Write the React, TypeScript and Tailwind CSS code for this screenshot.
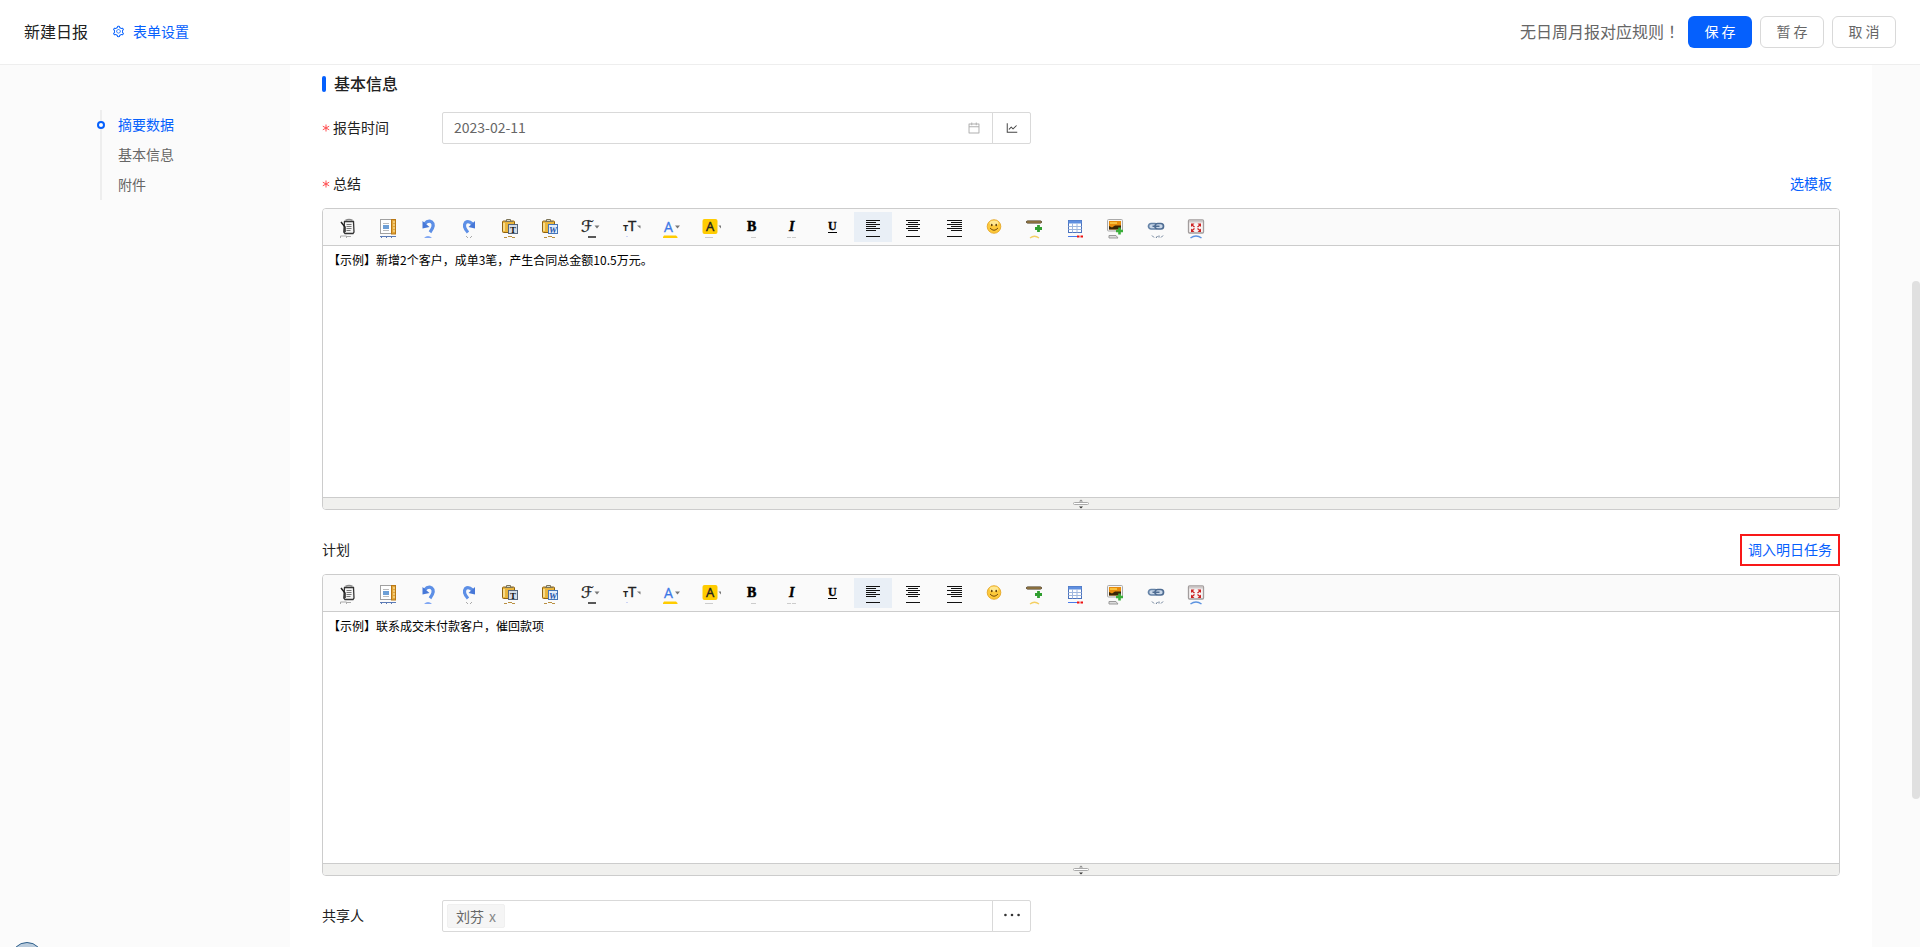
import { useState } from 'react';
import type { ReactNode } from 'react';
import { AiOutlineCalendar, AiOutlineEllipsis, AiOutlineLineChart, AiOutlineSetting } from 'react-icons/ai';

interface Tool {
  name: string;
  icon: ReactNode;
}

const Clipboard = () => (
  <>
    <rect x="2.5" y="3" width="12" height="11.5" rx="1" fill="#e9b53c" stroke="#8f6210" />
    <path d="M4 5v8" stroke="#fbe6a0" strokeWidth="1.6" />
    <path d="M5 3.5h8M6.5 1.5h4v2h-4z" fill="#d8d8c8" stroke="#7d7559" />
  </>
);

const Caret = ({ x }: { x: number }) => (
  <path d={`M${x} 7.5h5l-2.5 3z`} fill="#777" />
);

const tools: Tool[] = [
  {
    name: '源代码',
    icon: (
      <>
        <path d="M6.5 3.5h9l.5 10.5-1 1.500H7L5.800 14z" fill="#f4f4f4" stroke="#333" strokeWidth="1.3" />
        <path d="M7.5 2.5q3.5-2 7 0" fill="none" stroke="#888" strokeWidth="1.6" />
        <path d="M8.5 6.5h5M8.5 8.5h5M8.5 10.5h5M8.5 12.5h4" stroke="#777" />
        <path d="M3 4l4 5v5" fill="none" stroke="#222" strokeWidth="1.5" />
        <path d="M2.5 20v-2h6v2M9 18.5h4" fill="none" stroke="#aaa" />
      </>
    ),
  },
  {
    name: '模板',
    icon: (
      <>
        <rect x="2.5" y="1.5" width="11" height="14" fill="#fff" stroke="#444" strokeDasharray="1 1" />
        <rect x="5" y="7" width="6" height="4" fill="#6d9fd6" />
        <path d="M5 5.5h6M5 12.5h6" stroke="#bbb" />
        <rect x="13.5" y="1.5" width="4" height="14.5" fill="#e3a53a" stroke="#b97815" />
        <path d="M15 4h2M15 7h2M15 10h2M15 13h2" stroke="#fff0b0" />
        <path d="M2 18.5h16M3 19.5h1M8 19.5h1M13 19.5h1" stroke="#5c7bb5" />
      </>
    ),
  },
  {
    name: '后退',
    icon: (
      <>
        <path d="M5.500 6Q9 2 12.500 3.800q4 3.200-1.500 10.500" fill="none" stroke="#5d8fe6" strokeWidth="3.2" />
        <path d="M3.5 3v7.500l7-1.500z" fill="#4778d8" />
        <path d="M5 20q4-4 8 0z" fill="#7fa6f3" />
      </>
    ),
  },
  {
    name: '前进',
    icon: (
      <>
        <path d="M13.500 6Q9.500 2 6.500 4.500q-3 4 2.500 10" fill="none" stroke="#5d8fe6" strokeWidth="3.2" />
        <path d="M16 3v7.500l-6.500-1.500z" fill="#4778d8" />
        <path d="M7 18l2 2M13 18l-2 2" stroke="#aaa" />
      </>
    ),
  },
  {
    name: '粘贴为无格式文本',
    icon: (
      <>
        <Clipboard />
        <rect x="8.5" y="6.5" width="9" height="9" fill="#d4dde8" stroke="#56667c" />
        <text x="10" y="14.5" fontSize="9" fontWeight="bold" fontFamily="Liberation Serif, serif" fill="#111">T</text>
        <path d="M4 19.5h3M8 18.5h4M12 19.5h3" stroke="#b99042" />
      </>
    ),
  },
  {
    name: '从Word粘贴',
    icon: (
      <>
        <Clipboard />
        <rect x="8.5" y="6.5" width="9" height="9" fill="#e4eefb" stroke="#4676b8" />
        <text x="9" y="14.5" fontSize="9" fontWeight="bold" fontStyle="italic" fontFamily="Liberation Serif, serif" fill="#1d54a8">W</text>
        <path d="M4 19.5h3M8 18.5h4M12 19.5h3" stroke="#b99042" />
      </>
    ),
  },
  {
    name: '字体',
    icon: (
      <>
        <text x="1" y="14" fontSize="16" fontFamily="DejaVu Sans, serif" fill="#222" stroke="#222" strokeWidth=".3">ℱ</text>
        <Caret x={14.5} />
        <path d="M8 19h8" stroke="#222" strokeWidth="1.5" />
      </>
    ),
  },
  {
    name: '文字大小',
    icon: (
      <>
        <text x="2" y="13" fontSize="9" fontWeight="bold" fontFamily="Open Sans, sans-serif" fill="#222">T</text>
        <text x="7" y="13" fontSize="15" fontFamily="Open Sans, sans-serif" fill="#222" stroke="#222" strokeWidth=".4">T</text>
        <path d="M16 7.5h3.500v3z" fill="#777" />
        <path d="M5 18.500h2" stroke="#cdd4f5" />
      </>
    ),
  },
  {
    name: '文字颜色',
    icon: (
      <>
        <text x="3" y="14" fontSize="14" fontFamily="Open Sans, sans-serif" fill="#3b78e7" stroke="#3b78e7" strokeWidth=".3">A</text>
        <Caret x={14} />
        <path d="M2 20v-1l1-1.5h12l1.500 1.500v1z" fill="#fc0" />
      </>
    ),
  },
  {
    name: '文字背景',
    icon: (
      <>
        <rect x="1.5" y="1" width="15" height="15" rx="2" fill="#fc0" />
        <text x="5" y="13" fontSize="13" fontFamily="Open Sans, sans-serif" fill="#222" stroke="#222" strokeWidth=".4">A</text>
        <path d="M17.5 7.500h2.500v3z" fill="#777" />
        <path d="M4 19.5h8" stroke="#ccc" />
      </>
    ),
  },
  {
    name: '粗体',
    icon: (
      <>
        <text x="5" y="13" fontSize="14" fontWeight="bold" fontFamily="Liberation Serif, serif" fill="#000" stroke="#000" strokeWidth=".5">B</text>
        <path d="M9 19.5h5" stroke="#ccc" />
      </>
    ),
  },
  {
    name: '斜体',
    icon: (
      <>
        <text x="7" y="13" fontSize="14" fontWeight="bold" fontStyle="italic" fontFamily="Liberation Serif, serif" fill="#000" stroke="#000" strokeWidth=".4">I</text>
        <path d="M5 19.5h4M10 19.5h4" stroke="#ccc" />
      </>
    ),
  },
  {
    name: '下划线',
    icon: (
      <>
        <text x="5" y="12" fontSize="12" fontWeight="bold" fontFamily="Liberation Serif, serif" fill="#000" stroke="#000" strokeWidth=".3">U</text>
        <path d="M5 14.5h9" stroke="#000" />
      </>
    ),
  },
  {
    name: '左对齐',
    icon: (
      <path d="M3 2.5h14M3 4.5h10M3 6.5h14M3 8.5h10M3 10.5h14M3 12.5h10M3 18.5h14" stroke="#111" />
    ),
  },
  {
    name: '居中',
    icon: (
      <path d="M3 2.5h14M5 4.5h10M3 6.5h14M5 8.5h10M3 10.5h14M5 12.5h10M3 18.5h14" stroke="#111" />
    ),
  },
  {
    name: '右对齐',
    icon: (
      <path d="M3 2.5h15M7 4.5h11M3 6.5h15M7 8.5h11M3 10.5h15M7 12.5h11M3 18.5h15" stroke="#111" />
    ),
  },
  {
    name: '插入表情',
    icon: (
      <>
        <circle cx="10" cy="8.500" r="6.8" fill="#fdc93a" stroke="#e2a01b" strokeWidth=".8" />
        <ellipse cx="10" cy="5" rx="4.5" ry="2.5" fill="#fff0a8" opacity=".8" />
        <ellipse cx="7.8" cy="7" rx=".8" ry="1.3" fill="#5b3a08" />
        <ellipse cx="12.2" cy="7" rx=".8" ry="1.3" fill="#5b3a08" />
        <path d="M6 10q4 4.500 8 0" fill="none" stroke="#7a4d0a" />
      </>
    ),
  },
  {
    name: '插入横线',
    icon: (
      <>
        <rect x="2.5" y="3" width="15" height="2" rx="1" fill="#d6b26a" stroke="#3b2a10" />
        <path d="M14.500 7v7M11 10.500h7" stroke="#2f9e2f" strokeWidth="2.800" />
        <path d="M6 20q4.500-3.500 9 0" fill="none" stroke="#f4cf62" strokeWidth="1.3" />
      </>
    ),
  },
  {
    name: '表格',
    icon: (
      <>
        <rect x="3.5" y="2.500" width="13" height="12" fill="#fff" stroke="#4b73bd" />
        <path d="M3.500 4h13" stroke="#5f8fe0" strokeWidth="3" />
        <path d="M3.500 8.500h13M3.500 11.500h13M7.500 5.500v9M12 5.500v9" stroke="#9fb7de" />
        <path d="M3 18.500h10" stroke="#4a7bea" />
        <path d="M12 18.500h2.500M15.500 18.500H18" stroke="#e11" strokeWidth="2" />
      </>
    ),
  },
  {
    name: '图片',
    icon: (
      <>
        <rect x="2.5" y="1.5" width="15" height="11.5" rx="1" fill="#f4f4f4" stroke="#aaa" />
        <rect x="4" y="3" width="12" height="8.500" fill="#e78b0c" />
        <path d="M4 11.500V8l3 1.500 3-2h6v4z" fill="#3a2506" />
        <path d="M5 5h7" stroke="#ffd24c" strokeWidth="1.5" />
        <path d="M14.500 9.500v7M11 13h7" stroke="#3aae3a" strokeWidth="2.600" />
        <path d="M4 20v-2.500h7l2 2.500z" fill="#ddd" stroke="#999" />
      </>
    ),
  },
  {
    name: '超级链接',
    icon: (
      <>
        <rect x="2.5" y="5.500" width="9" height="5.500" rx="2.700" fill="#c9d7e8" stroke="#6482a6" strokeWidth="1.700" />
        <rect x="9" y="5.500" width="8.500" height="5.500" rx="2.700" fill="#c9d7e8" stroke="#4e6c92" strokeWidth="1.700" />
        <path d="M6.500 8.300h7" stroke="#4e6c92" strokeWidth="1.500" />
        <path d="M6 17.500l2 2M10 20l1.500-2M17 17.500l-2 2M13 17.500v2" stroke="#667a94" />
      </>
    ),
  },
  {
    name: '全屏显示',
    icon: (
      <>
        <rect x="2.5" y="2" width="15" height="13" rx="1" fill="#f7f3f3" stroke="#a29d9d" strokeWidth="1.300" />
        <path d="M3 3.500h14" stroke="#cfcaca" strokeWidth="2" />
        <path d="M5 5.500h3.500L5 9zM15 5.500h-3.500L15 9zM5 14h3.500L5 10.500zM15 14h-3.500L15 10.500z" fill="#c22" />
        <path d="M6 7l2.500 2M14 7l-2.500 2M6 12.500l2.500-2M14 12.500l-2.500-2" stroke="#c22" strokeWidth="1.300" />
        <path d="M4.500 20q5.500-4 11 0" fill="none" stroke="#5c93e0" strokeWidth="1.500" />
      </>
    ),
  },
];

function RichEditor({ id, text }: { id: string; text: string }) {
  const [value, setValue] = useState(text);

  return (
    <div className="mt-2 overflow-hidden rounded border border-[#ccc]">
      <div className="flex h-[37px] items-center border-b border-[#ccc] bg-[#fafafa] pl-[6px]">
        <div className="flex w-full max-w-[886px] justify-between">
          {tools.map((tool) => (
            <button
              key={tool.name}
              type="button"
              aria-label={tool.name}
              className={`flex h-[30px] w-[38px] items-center justify-center pt-[2px] ${tool.name === '左对齐' ? 'bg-[#e9eff6]' : ''}`}
            >
              <svg width="20" height="20" viewBox="0 0 20 20" className="overflow-visible">{tool.icon}</svg>
            </button>
          ))}
        </div>
      </div>
      <textarea
        id={id}
        value={value}
        onChange={(e) => setValue(e.target.value)}
        className="block h-[251px] w-full resize-none bg-white p-[5px] text-[12px] leading-[18px] text-black outline-none"
      />
      <div className="flex h-3 items-center justify-center border-t border-[#ccc] bg-[#f0f0ee]">
        <svg width="16" height="10" viewBox="0 0 16 10">
          <path d="M6 2.500h4L8 .5z" fill="#888" />
          <rect x=".5" y="3.500" width="15" height="2" rx="1" fill="#fff" stroke="#aaa" />
          <path d="M6 7.500h4L8 9.500z" fill="#333" />
        </svg>
      </div>
    </div>
  );
}

function Required() {
  return (
    <svg width="8" height="8" viewBox="0 0 8 8" className="mr-[3px]" aria-hidden="true">
      <path d="M4 .5v7M.8 2.200l6.400 3.600M.8 5.800l6.400-3.600" stroke="#ff4d4f" fill="none" />
    </svg>
  );
}

export default function App() {
  const [date, setDate] = useState('2023-02-11');
  const [sharers, setSharers] = useState(['刘芬']);

  return (
    <div className="relative flex min-h-screen flex-col overflow-hidden bg-[#fbfbfb] font-['Noto_Sans_CJK_SC',sans-serif] text-[14px] leading-[22px] text-[#212121]">
      <header className="flex h-[65px] items-center justify-between border-b border-[#eee] bg-white px-6">
        <div className="flex items-center pb-[2px]">
          <h1 className="text-[16px]">新建日报</h1>
          <a href="#settings" className="ml-6 flex items-center gap-2 text-[#0560fd]">
            <AiOutlineSetting className="h-[13px] w-[13px]" />
            表单设置
          </a>
        </div>
        <div className="flex items-center gap-2">
          <span className="pb-[2px] font-['Noto_Sans_CJK_SC',sans-serif] text-[16px] text-[#666]">
            无日周月报对应规则<span className="font-['Noto_Sans_CJK_TC',sans-serif]">！</span>
          </span>
          <button type="button" className="h-8 w-16 rounded-md bg-[#0560fd] pb-[2px] text-white">保 存</button>
          <button type="button" className="h-8 w-16 rounded-md border border-[#d9d9d9] bg-white pb-[2px] text-[#666]">暂 存</button>
          <button type="button" className="h-8 w-16 rounded-md border border-[#d9d9d9] bg-white pb-[2px] text-[#666]">取 消</button>
        </div>
      </header>

      <div className="flex flex-1">
        <aside className="w-[290px] shrink-0 pt-[45px] pl-[100px]">
          <nav className="flex flex-col border-l-2 border-[#eee] pl-4 text-[#666]">
            <a href="#summary" className="relative flex h-[30px] items-center pb-[2px] text-[#0560fd]">
              <span className="absolute top-[11px] -left-[21px] h-2 w-2 rounded-full border-2 border-[#0560fd] bg-white" />
              摘要数据
            </a>
            <a href="#basic" className="flex h-[30px] items-center pb-[2px]">基本信息</a>
            <a href="#files" className="flex h-[30px] items-center pb-[2px]">附件</a>
          </nav>
        </aside>

        <main className="mr-12 min-w-0 flex-1 bg-white px-8 pt-[7px]">
          <h2 className="flex h-6 items-center gap-2 text-[16px] font-medium">
            <span className="h-4 w-1 rounded-xs bg-[#0560fd]" />
            <span className="pb-[2px]">基本信息</span>
          </h2>

          <div className="mt-4 flex h-8 items-center">
            <label htmlFor="date" className="flex w-[120px] shrink-0 items-center">
              <Required />
              <span className="pb-[2px]">报告时间</span>
            </label>
            <div className="flex h-8 w-[589px]">
              <div className="flex flex-1 items-center rounded-l-xs border border-[#d9d9d9] px-[11px]">
                <input
                  id="date"
                  value={date}
                  onChange={(e) => setDate(e.target.value)}
                  className="min-w-0 flex-1 pb-[2px] text-[#666] outline-none"
                />
                <AiOutlineCalendar className="h-[14px] w-[14px] text-[#b0b0b0]" />
              </div>
              <button type="button" aria-label="统计" className="-ml-px flex w-[39px] items-center justify-center rounded-r-xs border border-[#d9d9d9] text-[#444]">
                <AiOutlineLineChart className="h-[14px] w-[14px]" />
              </button>
            </div>
          </div>

          <div className="mt-6 flex h-8 items-center justify-between">
            <label htmlFor="content" className="flex items-center">
              <Required />
              <span className="pb-[2px]">总结</span>
            </label>
            <a href="#template" className="px-2 pb-[2px] text-[#0560fd]">选模板</a>
          </div>
          <RichEditor id="content" text="【示例】新增2个客户，成单3笔，产生合同总金额10.5万元。" />

          <div className="mt-6 flex h-8 items-center justify-between">
            <label htmlFor="plan" className="pb-[2px]">计划</label>
            <a href="#tasks" className="flex h-8 items-center border-2 border-[#f81818] px-[6px] text-[#0560fd]">
              <span className="pb-[2px]">调入明日任务</span>
            </a>
          </div>
          <RichEditor id="plan" text="【示例】联系成交未付款客户，催回款项" />

          <div className="mt-6 flex h-8 items-center">
            <span className="w-[120px] shrink-0 pb-[2px]">共享人</span>
            <div className="flex h-8 w-[589px]">
              <div className="flex flex-1 items-center gap-1 rounded-l-xs border border-[#d9d9d9] px-1">
                {sharers.map((name) => (
                  <span key={name} className="flex h-6 items-center gap-[5px] rounded-xs border border-[#f0f0f0] bg-[#f5f5f5] px-2 text-[#666]">
                    {name}
                    <button type="button" aria-label={`移除${name}`} className="text-[#888]" onClick={() => setSharers(sharers.filter((s) => s !== name))}>x</button>
                  </span>
                ))}
              </div>
              <button type="button" aria-label="选择共享人" className="-ml-px flex w-[39px] items-center justify-center rounded-r-xs border border-[#d9d9d9] pb-[2px] text-[#333]">
                <AiOutlineEllipsis className="h-6 w-6" />
              </button>
            </div>
          </div>
        </main>
      </div>

      {/* scroll thumb and help bubble float over the page */}
      <div className="absolute top-[281px] right-0 h-[518px] w-2 rounded bg-[#e0e0e0]" />
      <div className="absolute -bottom-[27px] left-[11px] h-8 w-8 rounded-full border border-[#2d5f8b] bg-[#b9cbdc]" />
    </div>
  );
}
